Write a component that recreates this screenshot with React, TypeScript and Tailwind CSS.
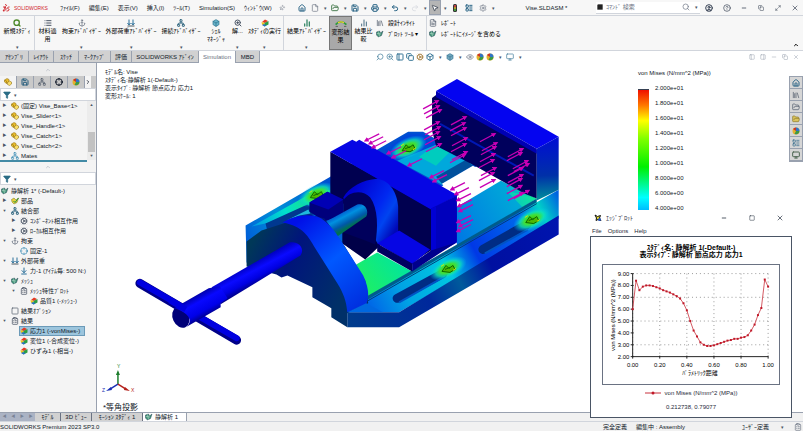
import { ReactNode } from "react";
import clsx from "clsx";
import {
  Anchor,
  ArrowDownToLine,
  Box,
  ChartNoAxesColumn,
  ChevronRight,
  ChevronUp,
  CircleHelp,
  CircleUser,
  ClipboardList,
  Cog,
  Copy,
  Crosshair,
  Eye,
  File,
  FileText,
  Filter,
  FolderOpen,
  House,
  LayoutList,
  Library,
  List,
  Maximize2,
  Minus,
  Monitor,
  MousePointer2,
  Network,
  PanelLeft,
  PanelRight,
  Pin,
  Printer,
  Redo2,
  Save,
  Search,
  Settings,
  Square,
  SquareTerminal,
  Undo2,
  X,
  ZoomIn,
} from "lucide-react";

/* ---------- small icons ---------- */

const Part = () => (
  <svg viewBox="0 0 16 16" className="size-2">
    <path d="M1 4 6 1l4 2v5l-5 3-4-3z" fill="#e9bd2e" stroke="#86660b" />
    <path d="m7 9 4-3 4 2v4l-4 3-4-2z" fill="#f7dc69" stroke="#86660b" />
    <path d="m1 4 4 2v5" fill="none" stroke="#86660b" />
  </svg>
);

const Plot = () => (
  <svg viewBox="0 0 16 16" className="size-2">
    <path d="M2 6 8 1l6 3-6 4z" fill="#e43b22" />
    <path d="m1 6 6 2v7l-5-4z" fill="#f3c61c" />
    <path d="m7 8 8-4v7l-8 4z" fill="#2c9d42" />
    <path d="m2 12 5 3 4-2-5-3z" fill="#236fc9" />
  </svg>
);

const Mesh = () => (
  <svg viewBox="0 0 16 16" className="size-2">
    <path d="M1 4 7 2l2 4 5-4-3 9-6 3-4-4z" fill="#3d9275" stroke="#2c4b5a" />
    <path d="m2 7 8 1M5 3l2 10" stroke="#d4ecdf" />
  </svg>
);

const SolidPart = () => (
  <svg viewBox="0 0 16 16" className="size-2">
    <path d="M1 5 6 2l4 4 5-4-3 9-6 3-4-4z" fill="#e8d23f" stroke="#7a701b" />
    <path d="m5 8 3 3 7-9" stroke="#24913c" strokeWidth="2" fill="none" />
  </svg>
);

const Ball = () => (
  <svg viewBox="0 0 16 16" className="size-2">
    <circle cx="8" cy="8" r="7" fill="#e6b12c" />
    <path d="M8 8V1a7 7 0 0 1 7 7z" fill="#2f75c8" />
    <path d="M8 8h7a7 7 0 0 1-10 6z" fill="#3a9a48" />
    <path d="M8 8 2 4a7 7 0 0 1 6-3z" fill="#c8322b" />
  </svg>
);

const Loads = () => (
  <svg viewBox="0 0 16 16" className="size-2">
    <path d="M4 1v9M12 1v9M1 8l3 4 3-4M9 8l3 4 3-4" fill="none" stroke="#296f99" strokeWidth="2" />
    <path d="M1 14h14" stroke="#4d5a62" strokeWidth="2" />
  </svg>
);

const Traffic = () => (
  <svg viewBox="0 0 16 16" className="size-2">
    <rect x="4" y="0" width="8" height="16" rx="3" fill="#333" />
    <circle cx="8" cy="4" r="2" fill="#e44" />
    <circle cx="8" cy="8" r="2" fill="#db3" />
    <circle cx="8" cy="12" r="2" fill="#4b4" />
  </svg>
);

const Deform = () => (
  <svg viewBox="0 0 20 12" className="h-2 w-3">
    <path d="M1 7c5-6 12-6 18 0" stroke="#2f9b3d" strokeWidth="3" fill="none" />
    <path d="M5 4c3-2 7-2 10 0" stroke="#f0d32c" strokeWidth="2" fill="none" />
    <path d="M1 10h4M15 10h4" stroke="#333" />
  </svg>
);

const DsLogo = () => (
  <svg viewBox="0 0 16 16" className="size-2">
    <path d="M6 1c4 0 4 3 0 4M2 14c7 0 9-8 1-8l4 1-5 7M15 6c-5 0-5 3-2 4s1 4-4 4" fill="none" stroke="#d1232a" strokeWidth="2" />
  </svg>
);

const Down = () => <span className="w-2 flex-none text-center text-[5px] text-gray-600">▾</span>;

/* ---------- title bar and ribbon ---------- */

const menus = ["ﾌｧｲﾙ(F)", "編集(E)", "表示(V)", "挿入(I)", "ﾂｰﾙ(T)", "Simulation(S)", "ｳｨﾝﾄﾞｳ(W)"];

const IconButton = ({ label, className, children }: { label: string; className?: string; children: ReactNode }) => (
  <button aria-label={label} className={clsx("flex flex-none items-center justify-center", className)}>
    {children}
  </button>
);

const TitleBar = () => (
  <header className="flex h-4 items-center border-b border-gray-300 bg-[#f7f7f7]">
    <div className="flex w-[60px] flex-none items-center gap-1 pl-0.5 text-[5px] text-[#d1232a]">
      <DsLogo />
      SOLIDWORKS
    </div>
    <nav className="flex w-[216px] flex-none gap-[9px] whitespace-nowrap">
      {menus.map((menu) => (
        <button key={menu}>{menu}</button>
      ))}
    </nav>
    <div className="flex flex-none items-center text-[#2b6586]">
      <IconButton label="Pin" className="w-3 text-gray-500">
        <Pin className="size-1.5 rotate-45" />
      </IconButton>
      <IconButton label="Home" className="ml-2 w-3">
        <House className="size-2" strokeWidth={3} />
      </IconButton>
      <IconButton label="New" className="ml-px w-3 text-gray-500">
        <File className="size-2" />
      </IconButton>
      <Down />
      <IconButton label="Open" className="w-3 text-[#4d7f55]">
        <FolderOpen className="size-2" strokeWidth={3} />
      </IconButton>
      <Down />
      <IconButton label="Save" className="w-3">
        <Save className="size-2" strokeWidth={3} />
      </IconButton>
      <Down />
      <IconButton label="Print" className="w-3">
        <Printer className="size-2" strokeWidth={3} />
      </IconButton>
      <Down />
      <IconButton label="Undo" className="w-3">
        <Undo2 className="size-2" strokeWidth={3} />
      </IconButton>
      <Down />
      <IconButton label="Redo" className="w-3 text-gray-300">
        <Redo2 className="size-2" />
      </IconButton>
      <Down />
      <IconButton label="Select" className="h-[15px] w-3 border border-gray-400 bg-[#b5b5b5] text-gray-800">
        <MousePointer2 className="size-2" fill="white" />
      </IconButton>
      <Down />
      <IconButton label="Rebuild" className="w-3">
        <Traffic />
      </IconButton>
      <IconButton label="Properties" className="w-4">
        <LayoutList className="size-2" strokeWidth={3} />
      </IconButton>
      <IconButton label="Options" className="w-3 text-gray-500">
        <Settings className="size-2" />
      </IconButton>
      <Down />
    </div>
    <h1 className="flex-1 whitespace-nowrap text-center">Vise.SLDASM *</h1>
    <label className="flex h-3 w-[104px] flex-none items-center gap-0.5 border-b border-gray-300 bg-white">
      <SquareTerminal className="size-2 text-white" fill="#222" />
      <input aria-label="Search commands" placeholder="ｺﾏﾝﾄﾞ 検索" className="min-w-0 flex-1 bg-transparent placeholder:text-gray-500" />
      <Search className="size-2 text-gray-500" />
      <Down />
    </label>
    <div className="flex flex-none items-center text-gray-700">
      <IconButton label="Account" className="w-[18px]">
        <CircleUser className="size-2" strokeWidth={3} />
      </IconButton>
      <IconButton label="Help" className="w-[17px]">
        <CircleHelp className="size-2" />
      </IconButton>
      <IconButton label="Minimize" className="w-[17px]">
        <Minus className="size-1.5" strokeWidth={3} />
      </IconButton>
      <IconButton label="Restore" className="w-[17px]">
        <Copy className="size-1.5" />
      </IconButton>
      <IconButton label="Maximize" className="w-[17px]">
        <Maximize2 className="size-1.5" />
      </IconButton>
      <IconButton label="Close" className="w-[17px]">
        <X className="size-2" />
      </IconButton>
    </div>
  </header>
);

type ToolProps = { icon: ReactNode; lines: string[]; arrow?: boolean; className: string };

const Tool = ({ icon, lines, arrow, className }: ToolProps) => (
  <button className={clsx("flex flex-none flex-col items-center whitespace-nowrap pt-0.5", className)}>
    <span className="flex h-[9px] items-center">{icon}</span>
    {lines.map((line) => (
      <span key={line} className="leading-[8px]">
        {line}
      </span>
    ))}
    {arrow && <span className="mt-auto text-[5px] leading-[6px] text-gray-600">▾</span>}
  </button>
);

const SmallTool = ({ icon, label }: { icon: ReactNode; label: string }) => (
  <button className="flex h-[11px] items-center gap-1 whitespace-nowrap">
    {icon}
    {label}
  </button>
);

const Ribbon = () => (
  <section className="flex h-[35px] items-stretch border-b border-gray-300 bg-[#f7f7f7] text-black">
    <Tool className="w-[35px] border-r border-gray-300" icon={<Search className="size-2 text-[#4f8a2c]" strokeWidth={4} />} lines={["新規ｽﾀﾃﾞｨ"]} arrow />
    <Tool className="w-[25px]" icon={<List className="size-2 text-gray-600" strokeWidth={3} />} lines={["材料適", "用"]} />
    <Tool className="w-[43px]" icon={<Anchor className="size-2 text-gray-500" />} lines={["拘束ｱﾄﾞﾊﾞｲｻﾞｰ"]} arrow />
    <Tool className="w-[56px]" icon={<Loads />} lines={["外部荷重ｱﾄﾞﾊﾞｲｻﾞｰ"]} arrow />
    <Tool className="w-[44px]" icon={<Network className="size-2 text-[#376b84]" strokeWidth={3} />} lines={["接続ｱﾄﾞﾊﾞｲｻﾞｰ"]} arrow />
    <Tool className="w-[26px]" icon={<Box className="size-2 text-[#2c718d]" fill="#68b3c9" />} lines={["ｼｪﾙ", "ﾏﾈｰｼﾞｬ"]} />
    <Tool className="w-[17px]" icon={<ZoomIn className="size-2 text-gray-600" strokeWidth={3} />} lines={["解..."]} arrow />
    <Tool className="w-[38px] border-r border-gray-300" icon={<Plot />} lines={["ｽﾀﾃﾞｨの実行"]} arrow />
    <Tool className="w-[45px]" icon={<ChartNoAxesColumn className="size-2 text-[#3b8b6b]" strokeWidth={4} />} lines={["結果ｱﾄﾞﾊﾞｲｻﾞｰ"]} arrow />
    <Tool className="w-[23px] border border-[#777] bg-[#a9a9a9]" icon={<Deform />} lines={["変形結", "果"]} />
    <Tool className="w-[23px]" icon={<ChartNoAxesColumn className="size-2 text-[#496e84]" strokeWidth={3} />} lines={["結果比", "較"]} />
    <div className="flex w-[52px] flex-none flex-col border-r border-gray-300 pl-px pt-px">
      <SmallTool icon={<Library className="size-2 text-gray-600" />} label="設計ｲﾝｻｲﾄ" />
      <SmallTool icon={<Mesh />} label="ﾌﾟﾛｯﾄ ﾂｰﾙ  ▾" />
    </div>
    <div className="flex flex-1 flex-col pl-0.5 pt-px">
      <SmallTool icon={<FileText className="size-2 text-gray-600" />} label="ﾚﾎﾟｰﾄ" />
      <SmallTool icon={<Mesh />} label="ﾚﾎﾟｰﾄにｲﾒｰｼﾞを含める" />
    </div>
    <button aria-label="Collapse ribbon" className="self-end pb-0.5 pr-1">
      <ChevronUp className="size-1.5" strokeWidth={4} />
    </button>
  </section>
);

const tabs = [
  { label: "ｱｾﾝﾌﾞﾘ", width: "w-[29px]" },
  { label: "ﾚｲｱｳﾄ", width: "w-[25px]" },
  { label: "ｽｹｯﾁ", width: "w-[25px]" },
  { label: "ﾏｰｸｱｯﾌﾟ", width: "w-[32px]" },
  { label: "評価", width: "w-[21px]" },
  { label: "SOLIDWORKS ｱﾄﾞｲﾝ", width: "w-[67px]" },
  { label: "Simulation", width: "w-[37px]" },
  { label: "MBD", width: "w-[24px]" },
];

const TabRow = () => (
  <div className="flex h-[12px] items-stretch bg-white">
    <div className="flex w-[376px] flex-none">
      {tabs.map(({ label, width }) => (
        <button
          key={label}
          className={clsx(
            "whitespace-nowrap border-r border-gray-400",
            width,
            label === "Simulation" ? "bg-white text-gray-500" : "border-b bg-[#d1d1d1]"
          )}>
          {label}
        </button>
      ))}
    </div>
    <div className="flex flex-none items-center gap-0.5 text-[#397797]">
      <Search className="size-2 -scale-x-100" />
      <ZoomIn className="size-2" />
      <PanelLeft className="size-2" strokeWidth={3} />
      <Copy className="size-2" strokeWidth={3} />
      <Cog className="size-2 text-[#a47b3a]" />
      <Box className="size-2" strokeWidth={3} />
      <Down />
      <Box className="size-2" fill="#72a8be" />
      <Down />
      <Eye className="size-2 text-gray-500" />
      <Ball />
      <Ball />
      <Down />
      <Monitor className="size-2" />
      <Down />
    </div>
    <div className="flex flex-1 items-center justify-end gap-[5px] pr-1 text-gray-400">
      <PanelLeft className="size-1.5" />
      <PanelRight className="size-1.5" />
      <Minus className="size-1.5" />
      <Copy className="size-1.5" />
      <X className="size-1.5" />
    </div>
  </div>
);

/* ---------- left panel ---------- */

const indents = ["pl-px", "pl-0", "pl-[9px]", "pl-[19px]"];

type RowProps = { icon: ReactNode; label: string; level?: number; caret?: string; selected?: boolean };

const Row = ({ icon, label, level = 1, caret, selected }: RowProps) => (
  <li className={clsx("flex h-[10px] items-center gap-0.5 whitespace-nowrap", indents[level])}>
    {level > 0 && <span className="w-[9px] flex-none text-center text-[4px] text-gray-600">{caret}</span>}
    <button className={clsx("flex items-center gap-0.5", selected && "bg-[#9cc5dd] pr-1 outline outline-[#6b9ab8]")}>
      <span className="flex size-2 flex-none items-center justify-center">{icon}</span>
      {label}
    </button>
  </li>
);

const FilterBox = () => (
  <label className="flex h-[13px] flex-none items-center border border-gray-300 bg-white pl-0.5">
    <Filter className="size-2 text-[#2a6c86]" fill="#2a6c86" />
    <Down />
    <input aria-label="Filter" className="min-w-0 flex-1" />
  </label>
);

const Grip = ({ className }: { className: string }) => (
  <div className={clsx("flex flex-none items-center justify-center text-gray-400", className)}>
    <ChevronUp className="size-1.5" />
  </div>
);

const study: RowProps[] = [
  { icon: <Mesh />, label: "静解析 1* (-Default-)", level: 0 },
  { icon: <SolidPart />, label: "部品", caret: "▶" },
  { icon: <Network className="size-2 text-[#376b84]" strokeWidth={3} />, label: "結合部", caret: "▼" },
  { icon: <Cog className="size-2 text-gray-600" />, label: "ｺﾝﾎﾟｰﾈﾝﾄ相互作用", level: 2, caret: "▶" },
  { icon: <Cog className="size-2 text-gray-600" />, label: "ﾛｰｶﾙ相互作用", level: 2, caret: "▶" },
  { icon: <Anchor className="size-2 text-gray-500" />, label: "拘束", caret: "▼" },
  { icon: <Crosshair className="size-2 text-[#3187b1]" />, label: "固定-1", level: 2 },
  { icon: <Loads />, label: "外部荷重", caret: "▼" },
  { icon: <ArrowDownToLine className="size-2 text-[#296f99]" strokeWidth={3} />, label: "力-1 (ｱｲﾃﾑ毎: 500 N:)", level: 2 },
  { icon: <Mesh />, label: "ﾒｯｼｭ", caret: "▼" },
  { icon: <ClipboardList className="size-2 text-gray-700" />, label: "ﾒｯｼｭ特性ﾌﾟﾛｯﾄ", level: 2, caret: "▼" },
  { icon: <Plot />, label: "品質1 (-ﾒｯｼｭ-)", level: 3 },
  { icon: <Square className="size-2 text-gray-600" />, label: "結果ｵﾌﾟｼｮﾝ" },
  { icon: <ClipboardList className="size-2 text-gray-700" />, label: "結果", caret: "▼" },
  { icon: <Plot />, label: "応力1 (-vonMises-)", level: 2, selected: true },
  { icon: <Plot />, label: "変位1 (-合成変位-)", level: 2 },
  { icon: <Plot />, label: "ひずみ1 (-相当-)", level: 2 },
];

const Sidebar = () => (
  <aside className="flex w-[97px] flex-none flex-col overflow-hidden border-r border-gray-400 bg-[#f4f4f4]">
    <Grip className="h-[13px] bg-[#ececec]" />
    <div className="flex h-[12px] flex-none items-stretch bg-[#c9c9c9]">
      {[
        <Part key="p" />,
        <Save key="s" className="size-2 text-[#265d7c]" strokeWidth={3} />,
        <Network key="n" className="size-2 text-gray-600" />,
        <Crosshair key="c" className="size-2" strokeWidth={3} />,
        <Ball key="b" />,
      ].map((icon, i) => (
        <IconButton key={i} label={`Panel ${i + 1}`} className={clsx("w-[17px] border-r border-gray-400", i === 0 && "bg-[#f4f4f4]")}>
          {icon}
        </IconButton>
      ))}
      <IconButton label="More panels" className="flex-1 bg-[#f4f4f4]">
        <ChevronRight className="size-1.5" strokeWidth={3} />
      </IconButton>
    </div>
    <FilterBox />
    <div className="flex h-[59px] flex-none">
      <ul className="flex-1">
        {["(固定) Vise_Base<1>", "Vise_Slider<1>", "Vise_Handle<1>", "Vise_Catch<1>", "Vise_Catch<2>"].map((label) => (
          <Row key={label} icon={<Part />} label={label} caret="▶" />
        ))}
        <Row icon={<Network className="size-2 text-[#3187b1]" />} label="Mates" caret="▶" />
      </ul>
      <div className="flex w-[9px] flex-none flex-col items-center bg-[#ececec] text-[4px] leading-[8px] text-gray-600">
        <span>▲</span>
        <span className="mt-auto h-[20px] w-[7px] bg-[#c2c2c2]" />
        <span>▼</span>
      </div>
    </div>
    <div className="mr-[9px] h-[2px] flex-none bg-[#438ba6]" />
    <Grip className="h-[10px] bg-[#f4f4f4]" />
    <FilterBox />
    <ul className="pt-px">
      {study.map((row) => (
        <Row key={row.label} {...row} />
      ))}
    </ul>
  </aside>
);

/* ---------- stress model ---------- */

// arrow tips: the first set lies on the fixed jaw, the second on the sliding jaw
const fixedTips = [
  [439, 100], [440, 105], [442, 109], [440, 121], [441, 126], [440, 131], [441, 136], [442, 143],
  [467, 116], [466, 122], [467, 127], [468, 137], [467, 143], [468, 151], [466, 154],
  [496, 133], [498, 142], [497, 146], [496, 153], [495, 159], [497, 167], [495, 172], [496, 179],
  [524, 148], [523, 152], [529, 160], [530, 163], [524, 167], [524, 174], [523, 178], [523, 185], [530, 190], [524, 192],
];

const slideTips = [
  [366, 140], [370, 143], [373, 147], [388, 153], [393, 157], [409, 165], [431, 177], [434, 181],
  [452, 189], [456, 194], [458, 200], [459, 206], [460, 211], [458, 222], [460, 226], [458, 231],
];

const hotSpots = [
  [317, 194],
  [409, 147],
  [449, 268],
  [533, 219],
];

const Vise = () => (
  <svg viewBox="97 62 706 350" preserveAspectRatio="xMinYMin meet" className="absolute inset-0 size-full" role="img" aria-label="Vise stress plot">
    <defs>
      <radialGradient id="hot">
        <stop offset="0" stopColor="#3fc400" />
        <stop offset=".4" stopColor="#3fe03a" />
        <stop offset=".65" stopColor="#10e6b0" stopOpacity=".8" />
        <stop offset="1" stopColor="#00b8ff" stopOpacity="0" />
      </radialGradient>
      <linearGradient id="rail" gradientUnits="userSpaceOnUse" x1="360" y1="305" x2="560" y2="195">
        <stop offset="0" stopColor="#0058e8" />
        <stop offset=".2" stopColor="#00a4e4" />
        <stop offset=".42" stopColor="#00c8e0" />
        <stop offset=".56" stopColor="#0038e6" />
        <stop offset=".8" stopColor="#0068ea" />
        <stop offset=".9" stopColor="#00d0c8" />
        <stop offset="1" stopColor="#0060e0" />
      </linearGradient>
      <linearGradient id="side" gradientUnits="userSpaceOnUse" x1="348" y1="320" x2="560" y2="215">
        <stop offset="0" stopColor="#003c8c" />
        <stop offset=".35" stopColor="#00289c" />
        <stop offset=".5" stopColor="#005a9c" />
        <stop offset=".65" stopColor="#0010a0" />
        <stop offset="1" stopColor="#0014b0" />
      </linearGradient>
      <linearGradient id="left" gradientUnits="userSpaceOnUse" x1="246" y1="235" x2="331" y2="185">
        <stop offset="0" stopColor="#0060d8" />
        <stop offset=".4" stopColor="#0090d8" />
        <stop offset="1" stopColor="#0050d0" />
      </linearGradient>
      <linearGradient id="slot" gradientUnits="userSpaceOnUse" x1="252" y1="225" x2="318" y2="192">
        <stop offset="0" stopColor="#0098e4" />
        <stop offset=".5" stopColor="#00e0cc" />
        <stop offset="1" stopColor="#20e070" />
      </linearGradient>
      <linearGradient id="deck" gradientUnits="userSpaceOnUse" x1="360" y1="290" x2="405" y2="258">
        <stop offset="0" stopColor="#20f060" />
        <stop offset="1" stopColor="#00e4a0" />
      </linearGradient>
      <linearGradient id="plate" gradientUnits="userSpaceOnUse" x1="458" y1="240" x2="535" y2="195">
        <stop offset="0" stopColor="#0078e4" />
        <stop offset=".8" stopColor="#00a8d8" />
        <stop offset="1" stopColor="#10e890" />
      </linearGradient>
      <linearGradient id="arch" gradientUnits="userSpaceOnUse" x1="300" y1="220" x2="366" y2="300">
        <stop offset="0" stopColor="#0010e8" />
        <stop offset=".5" stopColor="#0058ff" />
        <stop offset="1" stopColor="#0030e0" />
      </linearGradient>
      <linearGradient id="archFace" gradientUnits="userSpaceOnUse" x1="248" y1="250" x2="340" y2="300">
        <stop offset="0" stopColor="#003858" />
        <stop offset=".4" stopColor="#00147c" />
        <stop offset="1" stopColor="#003068" />
      </linearGradient>
      <linearGradient id="screw" gradientUnits="userSpaceOnUse" x1="342" y1="209" x2="351" y2="226">
        <stop offset="0" stopColor="#0040c8" />
        <stop offset=".4" stopColor="#0090e0" />
        <stop offset=".75" stopColor="#0058a8" />
        <stop offset="1" stopColor="#007050" />
      </linearGradient>
      <linearGradient id="rod" gradientUnits="userSpaceOnUse" x1="250" y1="264" x2="260" y2="283">
        <stop offset="0" stopColor="#0000c0" />
        <stop offset=".35" stopColor="#0a0aff" />
        <stop offset=".7" stopColor="#0000e0" />
        <stop offset="1" stopColor="#000080" />
      </linearGradient>
      <linearGradient id="collar" gradientUnits="userSpaceOnUse" x1="192" y1="297" x2="204" y2="319">
        <stop offset="0" stopColor="#0000a8" />
        <stop offset=".3" stopColor="#0808ff" />
        <stop offset=".7" stopColor="#0000e8" />
        <stop offset="1" stopColor="#000078" />
      </linearGradient>
      <linearGradient id="jawSide" gradientUnits="userSpaceOnUse" x1="548" y1="140" x2="550" y2="198">
        <stop offset="0" stopColor="#0010d0" />
        <stop offset=".6" stopColor="#0030a8" />
        <stop offset="1" stopColor="#008a9c" />
      </linearGradient>
      <linearGradient id="hub" gradientUnits="userSpaceOnUse" x1="352" y1="190" x2="402" y2="220">
        <stop offset="0" stopColor="#0000d0" />
        <stop offset=".55" stopColor="#0028f0" />
        <stop offset=".75" stopColor="#0044f0" />
        <stop offset="1" stopColor="#0008b8" />
      </linearGradient>
      <marker id="tip" viewBox="0 0 6 6" refX="4" refY="3" markerWidth="5" markerHeight="5" markerUnits="userSpaceOnUse" orient="auto">
        <path d="M0 0 6 3 0 6z" fill="#c800b4" />
      </marker>
    </defs>

    {/* base, far side */}
    <path d="M246 225 331 176 409 131H424L445 143 482 163 331 250 290 275 247 262z" fill="url(#left)" />
    <path d="M252 226 320 188 332 190 300 210 270 222z" fill="url(#slot)" />
    <path d="M266 223 308 204 318 213 300 218 268 231z" fill="#003890" />
    <path d="M287 220 309 209 311 213 300 215z" fill="#20b8dc" />
    <path d="M385 149 409 133H424L441 143 400 168z" fill="#0048d8" />
    <path d="M398 160 437 144 474 163 443 184z" fill="#00a8dc" />
    <path d="m420 156 17-12 14 7-14 14z" fill="#00dcb0" opacity=".7" />
    <path d="M437 176 467 159 474 165 443 183z" fill="#00509c" />
    <path d="m443 183 31-18 28 16-44 24z" fill="#fff" />

    {/* base, near side */}
    <path d="M457 207 502 180 538 198 458 247z" fill="url(#plate)" />
    <path d="M508 190 538 198 524 207z" fill="#10e8a0" opacity=".6" />
    <path d="M350 268 378 252 413 271 366 298z" fill="url(#deck)" />
    <path d="M366 297 538 198 538 205 362 308z" fill="#005c8c" />
    <path d="M348 312 362 303 560 189V218L400 312z" fill="url(#rail)" />
    <path d="M348 312H400L560 215V234L400 327H348z" fill="url(#side)" />
    <path d="M366 302 538 203" stroke="#003c78" />
    <path d="M398 298 444 273M484 249 528 224" stroke="#002c84" strokeWidth="9" strokeLinecap="round" />
    <path d="M400 302 446 276M486 253 529 229" stroke="#0054c4" strokeWidth="2" />

    {/* fixed jaw */}
    <path d="M433 97 437 94 538 149V198L526 193 474 164 437 145 433 130z" fill="#00005c" />
    <path d="M441 123 535 175" stroke="#0018b4" strokeWidth="2" />
    <path d="M437 90 458 78 560 136 538 148z" fill="#0404f0" />
    <path d="M437 90 538 148V153L437 96z" fill="#0000b4" />
    <path d="M538 148 560 136V189L538 200z" fill="url(#jawSide)" />

    {hotSpots.map(([x, y]) => (
      <g key={x}>
        <ellipse cx={x} cy={y} rx="20" ry="10" fill="url(#hot)" transform={`rotate(-25 ${x} ${y})`} />
        <path d={`M${x - 6} ${y + 3}l4-6 3 3 4-3 2 4-5 3zM${x - 3} ${y + 1}l5-2`} fill="#4fb800" stroke="#0a6800" />
        <path d={`M${x - 7} ${y - 2}l3-2M${x + 5} ${y + 2}l3-2`} stroke="#d4e800" />
      </g>
    ))}

    {/* sliding jaw */}
    <path d="M331 151 432 208V250L410 264 398 238 344 203 331 193z" fill="#000050" />
    <path d="M331 151 353 139 357 141 360 139 459 195 432 209z" fill="#0606e4" />
    <path d="M432 208 458 195V242L432 257z" fill="#0000bc" />
    <path d="M432 208 437 206V254L432 257z" fill="#0000d4" />
    <path d="M310 202 328 191 344 199V214L325 221 310 211z" fill="#00007c" />
    <path d="M310 202 328 191 344 199 329 209z" fill="#0000b4" />
    <path d="M343 230 367 222 382 244 366 259 343 243z" fill="#000048" />
    <path d="M343 243 363 258 355 263z" fill="#fff" />
    <path d="M344 197C350 186 364 179 378 178 391 180 398 192 399 206V239L379 244 372 232 352 224z" fill="url(#hub)" />
    <path d="M344 200C350 190 364 189 371 197 379 208 379 228 376 244L366 240 344 232z" fill="#00005c" />
    <path d="M400 230 431 249 413 264 378 243z" fill="#0606e4" />
    <path d="M378 243 413 263V271L378 251z" fill="#000060" />
    <path d="M413 263 432 250 457 242 413 271z" fill="#00008c" />
    <path d="M327 221 358 204C366 202 370 210 367 216L338 236z" fill="url(#screw)" />

    {/* front bracket */}
    <path d="M247 241 262 230 290 221 310 214 325 218 345 245 366 280 369 303 348 313V327L332 317V308L313 297V287L288 275 282 277 277 274 247 266z" fill="url(#archFace)" />
    <path d="M283 222C295 215 311 212 322 218 334 226 340 238 350 253L364 275C370 288 370 297 367 304L348 312C347 300 344 293 338 283L316 248C309 236 304 226 283 222z" fill="url(#arch)" />
    <path d="M348 312 367 303 384 312z" fill="#0068e0" />

    {/* handle and spindle */}
    <path d="M212 287 290 242C299 240 306 248 301 255L221 304z" fill="url(#rod)" />
    <path d="M140 283 237 340" stroke="#000088" strokeWidth="9" strokeLinecap="round" />
    <path d="M140 282 237 338" stroke="#0000e0" strokeWidth="6" strokeLinecap="round" />
    <ellipse cx="181" cy="317" rx="8" ry="11" transform="rotate(-25 181 317)" fill="#000078" />
    <path d="M174 308 209 288 220 286 228 298 221 303V307L186 327C194 322 190 312 174 308z" fill="url(#collar)" />
    <path d="M170 300 186 309" stroke="#0000e0" strokeWidth="6" />

    <g stroke="#c800b4" strokeWidth="1.3">
      {fixedTips.map(([x, y], i) => (
        <line key={i} x1={x - 15} y1={y + 8} x2={x} y2={y} markerEnd="url(#tip)" />
      ))}
      {slideTips.map(([x, y], i) => (
        <line key={i} x1={x + 14} y1={y - 7} x2={x} y2={y} markerEnd="url(#tip)" />
      ))}
    </g>

    {/* axis triad */}
    <g strokeWidth="1.5" fontSize="5">
      <path d="M118 384V373" stroke="#1d7d2c" />
      <path d="m116 375 2-5 2 5z" fill="#1d7d2c" />
      <path d="m118 384-8 5" stroke="#1a2fb4" />
      <path d="m106 391 5-4 1 3z" fill="#1a2fb4" />
      <path d="m118 384 8 5" stroke="#b4201a" />
      <path d="m130 391-5-4-1 3z" fill="#b4201a" />
      <text x="117" y="368" fill="#1d7d2c">Y</text>
      <text x="102" y="392" fill="#1a2fb4">Z</text>
      <text x="131" y="392" fill="#b4201a">X</text>
    </g>
  </svg>
);

/* ---------- overlays on the canvas ---------- */

const Legend = () => (
  <div className="absolute right-[86px] top-[6px] w-[79px]">
    <p className="whitespace-nowrap leading-[8px]">von Mises (N/mm^2 (MPa))</p>
    <div className="flex gap-1.5 pt-[7px]">
      <div className="mt-[5px] h-[129px] w-[11px] border-t border-gray-700 bg-[linear-gradient(#f01000,#ff7800_12%,#ffff00_24%,#80ff00_38%,#00f000_60%,#00ffff_84%,#0090ff)]" />
      <ul>
        {["2.000e+01", "1.800e+01", "1.600e+01", "1.400e+01", "1.200e+01", "1.000e+01", "8.000e+00", "6.000e+00", "4.000e+00"].map((value) => (
          <li key={value} className="h-[15px] leading-[8px]">
            {value}
          </li>
        ))}
      </ul>
    </div>
  </div>
);

const TaskPane = () => (
  <div className="absolute right-0 top-[13px] flex w-[14px] flex-col border border-gray-400 bg-[#d6d6d6] text-[#2b6586]">
    {[
      <House key="h" className="size-2" strokeWidth={3} />,
      <Library key="l" className="size-2 text-gray-600" />,
      <FolderOpen key="f" className="size-2 text-gray-600" />,
      <FolderOpen key="o" className="size-2 text-[#8b7524]" fill="#d9c35d" />,
      <Ball key="b" />,
      <LayoutList key="p" className="size-2" />,
      <Monitor key="m" className="size-2 text-[#4e6652]" strokeWidth={3} />,
    ].map((icon, i) => (
      <IconButton key={i} label={`Task ${i + 1}`} className="h-[12px] border-b border-gray-400">
        {icon}
      </IconButton>
    ))}
  </div>
);

const values = [
  6.0, 8.4, 7.6, 7.9, 8.0, 8.0, 7.95, 7.85, 7.75, 7.6, 7.5, 7.4, 7.25, 7.1, 6.9, 6.5, 5.9, 5.0, 4.2, 3.7, 3.2, 3.0, 2.9, 2.9,
  2.95, 3.05, 3.15, 3.25, 3.35, 3.4, 3.5, 3.5, 3.6, 3.65, 3.8, 4.2, 4.7, 5.5, 6.1, 8.5, 7.9,
];
const toX = (i: number) => 30 + (i / (values.length - 1)) * 137;
const toY = (v: number) => 8 + (9 - v) * 12;

const StressChart = () => (
  <svg viewBox="0 0 178 119" className="block h-[119px] w-full" fontSize="6" role="img" aria-label="von Mises along path">
    {[9, 8, 7, 6, 5, 4, 3, 2].map((v) => (
      <g key={v}>
        {v % 2 === 1 && <path d={`M30 ${toY(v)}H167`} stroke="#999" strokeDasharray="1 3" />}
        <path d={`M28 ${toY(v)}h3`} stroke="#222" />
        <text x="15" y={toY(v) + 2}>
          {v.toFixed(2)}
        </text>
      </g>
    ))}
    {[0, 1, 2, 3, 4, 5].map((n) => (
      <g key={n}>
        <path d={`M${toX(n * 8)} 8V92`} stroke="#999" strokeDasharray="1 3" />
        <path d={`M${toX(n * 8)} 91v3`} stroke="#222" />
        <text x={toX(n * 8)} y="102" textAnchor="middle">
          {(n / 5).toFixed(2)}
        </text>
      </g>
    ))}
    <path d="M30 8V92H167" fill="none" stroke="#222" />
    <polyline points={values.map((v, i) => `${toX(i)},${toY(v)}`).join(" ")} fill="none" stroke="#c8303c" strokeWidth=".8" />
    {values.map((v, i) => (
      <rect key={i} x={toX(i) - 1} y={toY(v) - 1} width="2" height="2" fill="#c01828" />
    ))}
    <text x="98" y="111" textAnchor="middle">
      ﾊﾟﾗﾒﾄﾘｯｸ距離
    </text>
    <text transform="translate(12 50) rotate(-90)" textAnchor="middle">
      von Mises (N/mm^2 (MPa))
    </text>
  </svg>
);

const ProbeWindow = () => (
  <section className="absolute -bottom-1.5 right-[11px] z-10 w-[202px] bg-white text-gray-800">
    <div className="flex h-[16px] items-center gap-1 pl-1">
      <svg viewBox="0 0 16 16" className="size-2">
        <path d="m2 2 5 3 6-2-2 5 3 5-6-2-4 2 1-5z" fill="#e3d52e" stroke="#111" strokeWidth="2" />
        <circle cx="11" cy="11" r="3" fill="#2a58bd" />
      </svg>
      <span className="flex-1">ｴｯｼﾞﾌﾟﾛｯﾄ</span>
      <IconButton label="Minimize plot" className="w-6">
        <Minus className="size-1.5" strokeWidth={3} />
      </IconButton>
      <IconButton label="Maximize plot" className="w-6">
        <Square className="size-1.5" />
      </IconButton>
      <IconButton label="Close plot" className="w-6">
        <X className="size-2" />
      </IconButton>
    </div>
    <nav className="flex h-[10px] items-center gap-1.5 pl-0.5">
      <button>File</button>
      <button>Options</button>
      <button>Help</button>
    </nav>
    <div className="border border-gray-600 px-[11px] pb-1.5 text-center">
      <h2 className="whitespace-nowrap pb-1.5 pt-[7px] text-[7px] font-bold leading-[7px] text-black">
        ｽﾀﾃﾞｨ名: 静解析 1(-Default-)
        <br />
        表示ﾀｲﾌﾟ: 静解析 節点応力 応力1
      </h2>
      <div className="border border-gray-500">
        <StressChart />
      </div>
      <p className="flex items-center justify-center gap-1 pt-1 leading-[8px]">
        <svg viewBox="0 0 16 4" className="h-1 w-4">
          <path d="M0 2h16" stroke="#c8303c" />
          <circle cx="8" cy="2" r="1.5" fill="#c01828" />
        </svg>
        von Mises (N/mm^2 (MPa))
      </p>
      <p className="pt-1.5 leading-[8px]">0.212738, 0.79077</p>
    </div>
  </section>
);

const Canvas = () => (
  <main className="relative flex-1 bg-white">
    <Vise />
    <div className="absolute left-2 top-[5px] whitespace-nowrap leading-[8px]">
      <p>ﾓﾃﾞﾙ名: Vise</p>
      <p>ｽﾀﾃﾞｨ名:静解析 1(-Default-)</p>
      <p>表示ﾀｲﾌﾟ: 静解析 節点応力 応力1</p>
      <p>変形ｽｹｰﾙ: 1</p>
    </div>
    <p className="absolute bottom-0 left-1.5 text-[8px] leading-[9px]">*等角投影</p>
    <Legend />
    <TaskPane />
    <ProbeWindow />
  </main>
);

/* ---------- bottom ---------- */

const Bottom = () => (
  <footer className="bg-[#f1f1f1]">
    <div className="flex h-[9px] items-stretch border-t border-gray-400">
      <div className="flex w-[35px] flex-none items-center justify-around bg-[#abb3c4] text-[4px] text-[#7a8396]">
        {["First", "Previous", "Next", "Last"].map((label, i) => (
          <button key={label} aria-label={label}>
            {i < 2 ? "◀" : "▶"}
          </button>
        ))}
      </div>
      <div className="flex whitespace-nowrap leading-[8px]">
        <button className="w-[26px] border-r border-gray-500 bg-[#d1d1d1]">ﾓﾃﾞﾙ</button>
        <button className="w-[31px] border-r border-gray-500 bg-[#d1d1d1]">3D ﾋﾞｭｰ</button>
        <button className="w-[51px] border-r border-gray-500 bg-[#d1d1d1]">ﾓｰｼｮﾝ ｽﾀﾃﾞｨ 1</button>
        <button className="flex w-[44px] items-center gap-0.5 border-r border-gray-400 bg-white pl-0.5">
          <Mesh />
          静解析 1
        </button>
      </div>
    </div>
    <div className="flex h-[10px] items-center border-t border-gray-300 leading-[8px]">
      <span className="flex-1">SOLIDWORKS Premium 2023 SP3.0</span>
      <span className="w-[33px]">完全定義</span>
      <span className="w-[106px]">編集中 : Assembly</span>
      <button className="w-[36px] text-left">ﾕｰｻﾞｰ定義</button>
      <Down />
      <ClipboardList className="ml-2 mr-px size-2 text-gray-500" />
    </div>
  </footer>
);

const App = () => (
  <div className="flex min-h-screen flex-col overflow-hidden bg-white font-['Liberation_Sans','Noto_Sans_CJK_JP',sans-serif] text-[6px] leading-[8px] text-gray-900">
    <TitleBar />
    <Ribbon />
    <TabRow />
    <div className="flex flex-1 items-stretch">
      <Sidebar />
      <Canvas />
    </div>
    <Bottom />
  </div>
);

export default App;
